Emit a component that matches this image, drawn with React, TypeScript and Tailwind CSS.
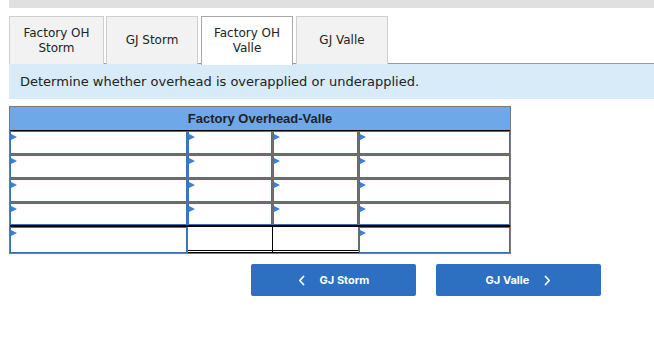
import React from 'react';

const tabs = [
  { label: ['Factory OH', 'Storm'], active: false, w: 'w-[95px]' },
  { label: ['GJ Storm'], active: false, w: 'w-[92px] ml-[2px]' },
  { label: ['Factory OH', 'Valle'], active: true, w: 'w-[92px] ml-[3px]' },
  { label: ['GJ Valle'], active: false, w: 'w-[92px] ml-[3px]' },
];

const cols = ['w-[178px]', 'w-[85px]', 'w-[86px]', 'w-[151px]'];

const Marker = () => (
  <span className="absolute left-0 top-[2px] w-0 h-0 border-y-[3.5px] border-y-transparent border-l-[6px] border-l-[#3d7fd0]" />
);

const InputCell = ({ w, last }: { w: string; last?: boolean }) => (
  <div className={`${w} h-full ${last ? '' : 'border-r border-[#6f6f6f]'} p-0`}>
    <div className="relative h-full border border-[#3a72b8] bg-white">
      <Marker />
    </div>
  </div>
);

const App = () => {
  const rows = [0, 1, 2, 3];
  return (
    <div className="w-[654px] h-[349px] bg-white pl-[9px]" style={{ fontFamily: '"DejaVu Sans", Verdana, sans-serif' }}>
      <div className="h-[8px] bg-[#e0e0e0]" />

      {/* Tabs */}
      <div className="mt-[8px] flex border-b border-[#9a9a9a] h-[48px]">
        {tabs.map((t, i) => (
          <div
            key={i}
            className={`${t.w} flex flex-col items-center justify-center text-[12px] leading-[15px] text-[#222] border border-b-0 ${
              t.active ? 'bg-white border-[#a8a8a8] h-[49px] relative z-10' : 'bg-[#f2f2f2] border-[#cfcfcf] h-[48px]'
            }`}
          >
            {t.label.map((l) => (
              <span key={l}>{l}</span>
            ))}
          </div>
        ))}
      </div>

      {/* Instruction */}
      <div className="h-[35px] bg-[#d7ebf9] flex items-center pl-[11px] text-[13px] text-[#222]">
        Determine whether overhead is overapplied or underapplied.
      </div>

      {/* T-account */}
      <div className="mt-[7px] w-[502px] border border-[#7a7a7a]" style={{ fontFamily: '"Liberation Sans", Arial, sans-serif' }}>
        <div className="h-[24px] bg-[#6fa8e9] border-b border-black flex items-center justify-center text-[13px] font-bold text-[#222]">
          Factory Overhead-Valle
        </div>
        {rows.map((r) => (
          <div key={r} className={`flex h-[24px] ${r === 3 ? 'border-b-2 border-black' : 'border-b border-[#6f6f6f]'}`}>
            {cols.map((w, i) => (
              <InputCell key={i} w={w} last={i === 3} />
            ))}
          </div>
        ))}
        <div className="flex h-[26px]">
          <InputCell w={cols[0]} />
          <div className={`${cols[1]} h-full border-r border-black border-b-[3px] border-b-black border-double bg-white`} />
          <div className={`${cols[2]} h-full border-r border-[#6f6f6f] border-b-[3px] border-b-black border-double bg-white`} />
          <InputCell w={cols[3]} last />
        </div>
      </div>

      {/* Nav buttons */}
      <div className="mt-[10px] pl-[242px] flex gap-[20px]" style={{ fontFamily: 'Inter, Roboto, sans-serif' }}>
        <button className="w-[165px] h-[32px] bg-[#2d6fc0] rounded-[2px] text-white text-[11px] font-bold flex items-center justify-center gap-[15px]">
          <svg width="7" height="11" viewBox="0 0 7 11" fill="none">
            <path d="M5.5 1.5L1.8 5.5L5.5 9.5" stroke="white" strokeWidth="1.8" strokeLinecap="round" strokeLinejoin="round" />
          </svg>
          <span>GJ Storm</span>
        </button>
        <button className="w-[165px] h-[32px] bg-[#2d6fc0] rounded-[2px] text-white text-[11px] font-bold flex items-center justify-center gap-[15px]">
          <span>GJ Valle</span>
          <svg width="7" height="11" viewBox="0 0 7 11" fill="none">
            <path d="M1.5 1.5L5.2 5.5L1.5 9.5" stroke="white" strokeWidth="1.8" strokeLinecap="round" strokeLinejoin="round" />
          </svg>
        </button>
      </div>
    </div>
  );
};

export default App;
